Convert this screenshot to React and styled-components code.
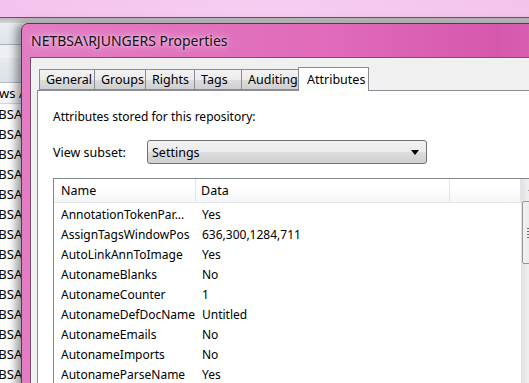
import React from 'react'
import styled, { createGlobalStyle } from 'styled-components'

const GlobalStyle = createGlobalStyle`
  html, body {
    margin: 0;
    padding: 0;
    overflow: hidden;
    background: #f4c4ee;
  }
  body {
    font-family: "Noto Sans", "Open Sans", sans-serif;
    color: #000;
  }
`

const Desktop = styled.div`
  position: relative;
  width: 529px;
  height: 383px;
  overflow: hidden;
  background: linear-gradient(90deg, #f4c2ee 0%, #f6cdf2 50%, #f3c3ee 100%);
`

// window behind the dialog, mostly covered
const BackWindow = styled.div`
  position: absolute;
  left: -40px;
  top: 17px;
  width: 620px;
  height: 380px;
  display: flex;
  flex-direction: column;
  background: #fff;
`

const BackFrame = styled.div`
  height: 5px;
  border-top: 1px solid #5d5d5d;
  background: linear-gradient(#b9b9b9, #d6d6d6);
`

const BackBar = styled.div`
  height: ${p => p.$h}px;
  background: ${p => p.$bg};
  border-bottom: 1px solid ${p => p.$line || 'transparent'};
`

const BackRow = styled.div`
  height: 20px;
  line-height: 20px;
  font-size: 13px;
  padding-left: ${p => (p.$head ? 0 : 14)}px;
  white-space: nowrap;
  background: ${p => (p.$head ? 'linear-gradient(#ffffff, #f1f2f4)' : '#fff')};
  border-bottom: ${p => (p.$head ? '1px solid #d5d5d5' : 'none')};
`

const Dialog = styled.div`
  position: absolute;
  left: 21px;
  top: 23px;
  width: 560px;
  height: 400px;
  display: flex;
  flex-direction: column;
  border: 1px solid #5a3650;
  border-radius: 7px 7px 0 0;
  background: linear-gradient(90deg, #e27cc3 0%, #e06bba 55%, #d658ac 85%, #dc6bb8 100%);
  box-shadow: -5px 0 9px rgba(0, 0, 0, 0.4);
`

const TitleBar = styled.div`
  height: 33px;
  display: flex;
  align-items: center;
  padding-left: 9px;
  font-size: 14px;
  color: #111;
  text-shadow: 0 0 8px rgba(255, 235, 250, 0.9), 0 0 3px rgba(255, 235, 250, 0.7);
`

const Client = styled.div`
  flex: 1;
  margin-left: 8px;
  display: flex;
  flex-direction: column;
  background: #f0f0f0;
  border-top: 1px solid #7a4d6c;
  border-left: 1px solid #7a4d6c;
  font-size: 12px;
`

const TabStrip = styled.div`
  display: flex;
  align-items: flex-end;
  height: 32px;
  padding-left: 8px;
`

const Tab = styled.div`
  width: ${p => p.$w}px;
  height: ${p => (p.$active ? 24 : 21)}px;
  box-sizing: border-box;
  display: flex;
  align-items: center;
  padding-left: ${p => (p.$active ? 8 : 6)}px;
  margin-left: ${p => (p.$active ? -1 : 0)}px;
  margin-bottom: ${p => (p.$active ? -1 : 0)}px;
  border: 1px solid #898c95;
  border-bottom: ${p => (p.$active ? 'none' : '1px solid #898c95')};
  border-left: ${p => (p.$first || p.$active ? '1px solid #898c95' : 'none')};
  background: ${p => (p.$active ? '#fff' : 'linear-gradient(#f2f2f2 0%, #ebebeb 50%, #dddddd 51%, #cfcfcf 100%)')};
  position: relative;
  z-index: ${p => (p.$active ? 2 : 1)};
  font-size: 12.5px;
`

const Panel = styled.div`
  flex: 1;
  margin-left: 6px;
  background: #fff;
  border: 1px solid #898c95;
  padding: 17px 0 0 15px;
  display: flex;
  flex-direction: column;
`

const Intro = styled.div`
  font-size: 12px;
  line-height: 17px;
`

const SubsetRow = styled.div`
  display: flex;
  align-items: center;
  margin-top: 15px;
  height: 24px;
`

const Label = styled.div`
  width: 94px;
  font-size: 12.5px;
`

const Combo = styled.div`
  width: 280px;
  height: 24px;
  box-sizing: border-box;
  display: flex;
  align-items: center;
  justify-content: space-between;
  padding: 0 6px 0 4px;
  border: 1px solid #707070;
  border-radius: 3px;
  background: linear-gradient(#f2f2f2 0%, #ebebeb 50%, #dddddd 51%, #cfcfcf 100%);
  font-size: 12.5px;
`

const Arrow = styled.div`
  width: 0;
  height: 0;
  border-left: 4px solid transparent;
  border-right: 4px solid transparent;
  border-top: 5px solid #000;
  margin-right: 1px;
`

const ListView = styled.div`
  margin-top: 14px;
  flex: 1;
  display: flex;
  border: 1px solid #828790;
  border-right: none;
  border-bottom: none;
`

const ListBody = styled.div`
  width: 467px;
  display: flex;
  flex-direction: column;
`

const HeaderRow = styled.div`
  display: grid;
  grid-template-columns: 142px 254px 1fr;
  height: 23px;
  background: linear-gradient(#ffffff 0%, #ffffff 40%, #f4f5f7 100%);
  border-bottom: 1px solid #e5e5e5;
  margin-bottom: 1px;
`

const HeadCell = styled.div`
  display: flex;
  align-items: center;
  padding-left: ${p => p.$pad}px;
  border-right: 1px solid #e3e4e6;
  font-size: 12.5px;
`

const Row = styled.div`
  display: grid;
  grid-template-columns: 142px 1fr;
  height: 20px;
  align-items: center;
  font-size: 12px;
  white-space: nowrap;
`

const NameCell = styled.div`
  padding-left: 7px;
  overflow: hidden;
`

const DataCell = styled.div`
  padding-left: 6px;
`

const ScrollBar = styled.div`
  width: 17px;
  display: flex;
  flex-direction: column;
  background: linear-gradient(90deg, #e3e3e3, #efefef 40%, #eaeaea);
  border-left: 1px solid #e0e0e0;
`

const ScrollUp = styled.div`
  height: 20px;
  display: flex;
  align-items: center;
  justify-content: center;
  &::before {
    content: '';
    border-left: 3px solid transparent;
    border-right: 3px solid transparent;
    border-bottom: 3px solid #4d4d4d;
  }
`

const Thumb = styled.div`
  height: 63px;
  margin: 2px 0 0 0;
  box-sizing: border-box;
  border: 1px solid #979797;
  border-radius: 2px;
  background: linear-gradient(90deg, #f1f1f1, #e4e4e4);
  display: flex;
  flex-direction: column;
  justify-content: center;
  gap: 2px;
  padding-left: 4px;
`

const Grip = styled.div`
  width: 6px;
  height: 1px;
  background: #6a6a6a;
`

const rows = [
  ['AnnotationTokenPar...', 'Yes'],
  ['AssignTagsWindowPos', '636,300,1284,711'],
  ['AutoLinkAnnToImage', 'Yes'],
  ['AutonameBlanks', 'No'],
  ['AutonameCounter', '1'],
  ['AutonameDefDocName', 'Untitled'],
  ['AutonameEmails', 'No'],
  ['AutonameImports', 'No'],
  ['AutonameParseName', 'Yes'],
  ['AutonameUseTitle', 'No'],
]

const tabs = [
  { label: 'General', w: 56 },
  { label: 'Groups', w: 51 },
  { label: 'Rights', w: 49 },
  { label: 'Tags', w: 47 },
  { label: 'Auditing', w: 57 },
  { label: 'Attributes', w: 71, active: true },
]

const App = () => (
  <Desktop>
    <GlobalStyle />
    <BackWindow>
      <BackFrame />
      <BackBar $h={21} $bg="linear-gradient(#e9ecf1, #dfe4eb)" $line="#a9b0ba" />
      <BackBar $h={12} $bg="#eef0f3" />
      <BackBar $h={24} $bg="linear-gradient(#e6e9ee, #dde2e8)" $line="#b4b9c0" />
      <BackRow $head>Windows Account</BackRow>
      {Array.from({ length: 14 }).map((_, i) => (
        <BackRow key={i}>NETBSA\RJUNGERS</BackRow>
      ))}
    </BackWindow>

    <Dialog>
      <TitleBar>NETBSA\RJUNGERS Properties</TitleBar>
      <Client>
        <TabStrip>
          {tabs.map((t, i) => (
            <Tab key={t.label} $w={t.w} $active={t.active} $first={i === 0}>
              {t.label}
            </Tab>
          ))}
        </TabStrip>
        <Panel>
          <Intro>Attributes stored for this repository:</Intro>
          <SubsetRow>
            <Label>View subset:</Label>
            <Combo>
              <span>Settings</span>
              <Arrow />
            </Combo>
          </SubsetRow>
          <ListView>
            <ListBody>
              <HeaderRow>
                <HeadCell $pad={7}>Name</HeadCell>
                <HeadCell $pad={5}>Data</HeadCell>
                <HeadCell $pad={5} />
              </HeaderRow>
              {rows.map(([name, data]) => (
                <Row key={name}>
                  <NameCell>{name}</NameCell>
                  <DataCell>{data}</DataCell>
                </Row>
              ))}
            </ListBody>
            <ScrollBar>
              <ScrollUp />
              <Thumb>
                <Grip />
                <Grip />
                <Grip />
                <Grip />
              </Thumb>
            </ScrollBar>
          </ListView>
        </Panel>
      </Client>
    </Dialog>
  </Desktop>
)

export default App
